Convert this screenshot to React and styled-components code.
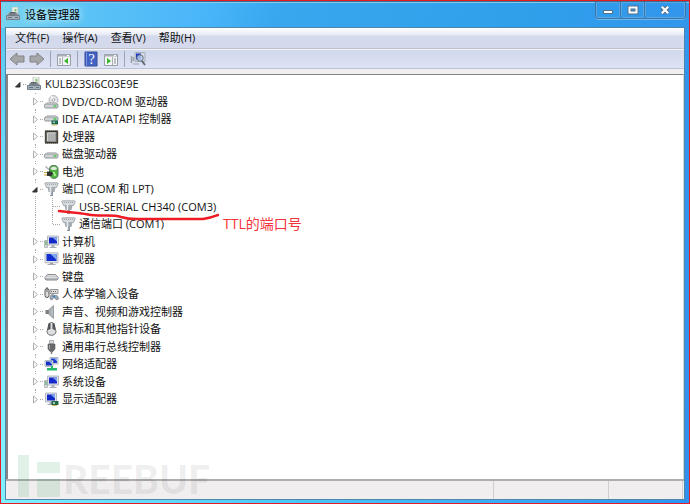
import styled, { createGlobalStyle } from "styled-components";

const GlobalStyle = createGlobalStyle`
	* {
		box-sizing: border-box;
	}
	body {
		margin: 0;
		font-family: "Open Sans", "Noto Sans CJK SC", sans-serif;
		font-size: 11px;
		color: #111;
	}
	button {
		padding: 0;
		border: 0;
		background: none;
		font: inherit;
		color: inherit;
	}
	svg {
		display: block;
	}
`;

const ComputerIcon = () => (
	<Icon viewBox="0 0 15 14">
		<path d="M6 0h6v8H6z" fill="#eef0ec" stroke="#b4b9b3" strokeWidth=".7" />
		<path d="M8.500 2h2v2.500h-2z" fill="#7cc76c" />
		<path d="M2 7l2-2h6l3 3v2H1z" fill="#8b949a" />
		<path d="M4 5.500h5M3.500 7h6" stroke="#5d666c" />
		<path d="M.5 8.500h13v4H.5z" fill="#a4b1ba" stroke="#75818a" />
		<path d="M2 10.500h4M9 10.500h3" stroke="#5e7482" />
	</Icon>
);

const Drive = ({ y = 7 }) => (
	<g>
		<path d={`M3 ${y}h9l2 2H1z`} fill="#e3e5e7" stroke="#aaa" strokeWidth=".6" />
		<rect x=".5" y={y + 1.5} width="13.500" height="4" rx="1.200" fill="#d0d3d5" stroke="#8f9498" />
		<path d={`M9.500 ${y + 3.5}h3`} stroke="#35c83e" strokeWidth="1.400" />
	</g>
);

const DiscIcon = () => (
	<Icon viewBox="0 0 15 14">
		<circle cx="9.500" cy="5" r="4.500" fill="#e1e1e6" stroke="#a5a5ac" strokeWidth=".8" />
		<path d="M9.500 5L7 1.500M9.500 5l3 2.500" stroke="#fff" strokeWidth="1.500" />
		<circle cx="9.500" cy="5" r="1.300" fill="#fff" stroke="#888" strokeWidth=".7" />
		<Drive y={7.5} />
	</Icon>
);

const IdeIcon = () => (
	<Icon viewBox="0 0 15 14">
		<Drive y={3.5} />
		<path d="M7.500 8.500h6.500v4H7.500z" fill="#1d6b50" />
		<path d="M8 13h5" stroke="#d4c25a" />
		<path d="M9 9.500h2v1.500H9z" fill="#9fcdb5" />
	</Icon>
);

const CpuIcon = () => (
	<Icon viewBox="0 0 15 14">
		<rect x="1" y=".5" width="13" height="13" rx="1" fill="#3a3731" />
		<rect x="1" y=".5" width="13" height="13" fill="none" stroke="#7b786b" strokeDasharray="1 1" />
		<rect x="3" y="2.500" width="9" height="9" fill="#b0b0b0" stroke="#8b8b8b" />
		<path d="M3.500 11V3h8" fill="none" stroke="#d2d2d2" />
	</Icon>
);

const DiskIcon = () => (
	<Icon viewBox="0 0 15 14">
		<Drive y={5.5} />
	</Icon>
);

const BatteryIcon = () => (
	<Icon viewBox="0 0 15 14">
		<path d="M5.500 4c0-5 8.500-5 8.500 0v6c0 4-7 5-8.500 0z" fill="#4fb341" stroke="#52715a" />
		<path d="M6.500 3.500c1 2 5.500 2 6.500 0-1-2.500-5.500-2.500-6.500 0z" fill="#dfe9dc" />
		<path d="M9.500 7l2 4" stroke="#a5ea8e" strokeWidth="1.800" />
		<path d="M1.500 1.500l3.500 3" stroke="#aaa" strokeWidth="1.300" />
		<path d="M3 6.500h4.500l1.500 2-1.500 2.500H3z" fill="#333" />
		<path d="M0 7.500h3M0 10h3" stroke="#c4a22b" />
	</Icon>
);

const PortIcon = () => (
	<Icon viewBox="0 0 15 14">
		<path d="M.8 1.500Q.8.800 1.800.800H13.200Q14.200.800 14.200 1.500L12.500 5.500H2.500z" fill="#d5d9dc" stroke="#969da3" strokeWidth=".8" />
		<path d="M3 2.500h9" stroke="#a3aab0" strokeDasharray="1 1" />
		<path d="M3.500 5.500h8l-1 4.500h-6z" fill="#a5adb4" />
		<path d="M6 9.500h3V14H6z" fill="#8e979e" />
		<path d="M6.500 4v9" stroke="#e8ebed" strokeWidth="1.500" />
	</Icon>
);

const Screen = ({ x = 4 }) => (
	<g transform={`translate(${x} 0)`}>
		<path d="M0 1h11v9H0z" fill="#dfe2e8" stroke="#a5abb5" strokeWidth=".8" />
		<path d="M1.500 2.500h8v6h-8z" fill="#1428c8" />
		<path d="M5 2.500h4.500v4z" fill="#7fa5ee" />
		<path d="M4 10h3v2H4z" fill="#aab0b8" />
		<path d="M2 12.500h7" stroke="#a5abb3" />
	</g>
);

const PcIcon = () => (
	<Icon viewBox="0 0 15 14">
		<path d="M.5 5.500h3v7h-3z" fill="#d5d9da" stroke="#a0a6aa" strokeWidth=".7" />
		<path d="M2 6v4" stroke="#42a84a" />
		<Screen x={3.5} />
	</Icon>
);

const MonitorIcon = () => (
	<Icon viewBox="0 0 15 14">
		<path d="M1 .8h13v10H1z" fill="#e2e4e8" stroke="#a9afb5" strokeWidth=".8" />
		<path d="M2.500 2h10v7h-10z" fill="#142cd0" />
		<path d="M6.500 2h6v6z" fill="#7ea8f0" />
		<path d="M6 11h3v1H6z" fill="#999" />
		<path d="M3.500 12.500h8" stroke="#a5abb1" />
	</Icon>
);

const KeyboardIcon = () => (
	<Icon viewBox="0 0 15 14">
		<path d="M3.500 4.500h8l2.500 3v1.500l-1 1H2L1 9V7.500z" fill="#dcdee0" stroke="#85898e" />
		<path d="M3 6.500h9" stroke="#c8cbce" />
		<path d="M1.500 9h12" stroke="#90959a" />
	</Icon>
);

const HidIcon = () => (
	<Icon viewBox="0 0 15 14">
		<rect x="1" y="1.500" width="4" height="9" rx="2" fill="#ddd" stroke="#555" />
		<path d="M3 0v5" stroke="#666" />
		<path d="M6 2.500h8v4H6z" fill="#ddd" stroke="#999" />
		<path d="M7 4.500h6" stroke="#666" strokeDasharray="1 1" />
		<path d="M6 12c0-5 2-5 4-4s4-1 4.500 4l-2 1-1.500-2H9l-1 2z" fill="#9aa5b0" stroke="#6b7580" strokeWidth=".6" />
		<path d="M9 9.500h2" stroke="#2c86d8" strokeWidth="1.500" />
	</Icon>
);

const SpeakerIcon = () => (
	<Icon viewBox="0 0 15 14">
		<path d="M1.500 5h3.500v4H1.500z" fill="#777f85" />
		<path d="M4.500 5L9.500.500v13L4.500 9z" fill="#a6adb2" stroke="#82898e" strokeWidth=".7" />
		<path d="M8 3v8" stroke="#c5cacd" />
	</Icon>
);

const MouseIcon = () => (
	<Icon viewBox="0 0 15 14">
		<path d="M5 1.500q2.500-2 5 0l2 8c0 5-9 5-9 0z" fill="#dcdedf" stroke="#66696c" />
		<path d="M4.500 1.500h2V7L4 8zM8.500 1.500h2L11 8l-2.500-1z" fill="#4c4f52" />
	</Icon>
);

const UsbIcon = () => (
	<Icon viewBox="0 0 15 14">
		<path d="M5.500.5h4v3h-4z" fill="#d7d9da" stroke="#9b9fa1" strokeWidth=".8" />
		<path d="M4 4h7v5l-2 2.500H6L4 9z" fill="#65696c" stroke="#5a5e61" strokeWidth=".6" />
		<path d="M7.500 11v3" stroke="#777" strokeWidth="1.500" />
		<path d="M5.500 5v4" stroke="#a3a7a9" />
	</Icon>
);

const NetworkIcon = () => (
	<Icon viewBox="0 0 15 14">
		<path d="M6 .5h8v6.500H6z" fill="#dce2ea" stroke="#9ba3ac" strokeWidth=".7" />
		<path d="M7 1.500h6v4.500H7z" fill="#1b3bcc" />
		<path d="M10 1.500h3v3z" fill="#8fb6f5" />
		<path d="M1 3.500h8v6H1z" fill="#dce2ea" stroke="#9ba3ac" strokeWidth=".7" />
		<path d="M2 4.500h6v4H2z" fill="#152ec0" />
		<path d="M5 4.500h3v3z" fill="#8fb6f5" />
		<path d="M7 9h2v2h4v2.500H3V11h4z" fill="#26b96c" />
	</Icon>
);

const DisplayIcon = () => (
	<Icon viewBox="0 0 15 14">
		<Screen x={1.5} />
		<path d="M7.500 9h7v4h-7z" fill="#1f684a" />
		<path d="M9 10h2v2H9z" fill="#a4c8b4" />
		<path d="M8 13.500h5" stroke="#cfbf61" />
	</Icon>
);

const ArrowIcon = ({ flip }) => (
	<ToolSvg viewBox="0 0 16 16">
		<path
			d="M1 8L8 2v3H15v6H8v3z"
			transform={flip ? "matrix(-1 0 0 1 16 0)" : undefined}
			fill="#a5a6a8"
			stroke="#828386"
			strokeLinejoin="round"
		/>
	</ToolSvg>
);

const PaneIcon = ({ flip }) => (
	<ToolSvg viewBox="0 0 16 16">
		<path d="M1.500 3.500h13v11h-13z" fill="#f3f4f5" stroke="#9a9fa5" />
		<path d="M2 4.500h12" stroke="#a9afb6" strokeWidth="2" />
		<path d="M11 4.500h2" stroke="#fff" />
		<g transform={flip ? "matrix(-1 0 0 1 16 0)" : undefined}>
			<path d="M6.500 6v8" stroke="#aaafb4" />
			<path d="M3 8h2M3 10h2M3 12h2" stroke="#8a9096" />
			<path d="M12 7v6L8 10z" fill="#39b52b" />
		</g>
	</ToolSvg>
);

const HelpIcon = () => (
	<ToolSvg viewBox="0 0 16 16">
		<path d="M2 1h12v14H2z" fill="#4263c4" stroke="#344c9a" />
		<path d="M3.500 1v14" stroke="#7892dc" />
		<text x="8.500" y="13" fill="#fff" fontSize="14" fontFamily="Liberation Serif" textAnchor="middle">
			?
		</text>
	</ToolSvg>
);

const ScanIcon = () => (
	<ToolSvg viewBox="0 0 16 16">
		<path d="M1.500 5v7M3.500 6v4" stroke="#9aa0a6" strokeWidth="1.500" />
		<path d="M5 1.500h10v9H5z" fill="#d5dae3" stroke="#a8aeb8" />
		<path d="M6 2.500h5v6H6z" fill="#1a35c8" />
		<circle cx="10" cy="7" r="3.200" fill="#bdd5f3" fillOpacity=".8" stroke="#65707f" />
		<path d="M12 10l3 4" stroke="#606871" strokeWidth="1.800" />
		<path d="M3 13h6" stroke="#9ba1a8" />
	</ToolSvg>
);

const devices = [
	{ name: "KULB23SI6C03E9E", level: 0, icon: ComputerIcon, open: true },
	{ name: "DVD/CD-ROM 驱动器", level: 1, icon: DiscIcon },
	{ name: "IDE ATA/ATAPI 控制器", level: 1, icon: IdeIcon },
	{ name: "处理器", level: 1, icon: CpuIcon },
	{ name: "磁盘驱动器", level: 1, icon: DiskIcon },
	{ name: "电池", level: 1, icon: BatteryIcon },
	{ name: "端口 (COM 和 LPT)", level: 1, icon: PortIcon, open: true },
	{ name: "USB-SERIAL CH340 (COM3)", level: 2, icon: PortIcon, marked: true },
	{ name: "通信端口 (COM1)", level: 2, icon: PortIcon, last: true },
	{ name: "计算机", level: 1, icon: PcIcon },
	{ name: "监视器", level: 1, icon: MonitorIcon },
	{ name: "键盘", level: 1, icon: KeyboardIcon },
	{ name: "人体学输入设备", level: 1, icon: HidIcon },
	{ name: "声音、视频和游戏控制器", level: 1, icon: SpeakerIcon },
	{ name: "鼠标和其他指针设备", level: 1, icon: MouseIcon },
	{ name: "通用串行总线控制器", level: 1, icon: UsbIcon },
	{ name: "网络适配器", level: 1, icon: NetworkIcon },
	{ name: "系统设备", level: 1, icon: PcIcon },
	{ name: "显示适配器", level: 1, icon: DisplayIcon, last: true },
];

const Device = ({ name, level, icon: DeviceIcon, open, last, marked }) => (
	<Row role="treeitem" aria-level={level + 1} aria-expanded={level < 2 ? !!open : undefined}>
		{level > 0 && <Indent />}
		{level > 1 && <Guide />}
		{level < 2 ? (
			<Expander $line={level > 0} $last={last} aria-label={name}>
				<svg width="8" height="13" viewBox="0 0 8 13">
					<path d="M0 0h8v13H0z" fill="#fff" />
					{open ? (
						<path d="M6 4.500v4.500H1.500z" fill="#333" stroke="#333" />
					) : (
						<path d="M2.500 3v7L6.500 6.500z" fill="#fff" stroke="#adadad" />
					)}
				</svg>
			</Expander>
		) : (
			<Elbow $line $last={last} />
		)}
		<Stub $wide={level > 1} />
		<DeviceIcon />
		<DeviceName>{name}</DeviceName>
		{marked && (
			<Note>
				<svg width="164" height="24" viewBox="0 0 164 24">
					<path
						d="M3 5C12 6.500 20 6 32 8.500S55 8 65 11s14 2 22 2h60c8-1 10-2 15-4"
						fill="none"
						stroke="#ed1c24"
						strokeWidth="2.500"
						strokeLinecap="round"
					/>
				</svg>
				<NoteText>TTL的端口号</NoteText>
			</Note>
		)}
	</Row>
);

const App = () => {
	return (
		<Window>
			<GlobalStyle />
			<TitleBar>
				<Title>
					<ComputerIcon />
					<h1>设备管理器</h1>
				</Title>
				<WindowButtons>
					<WindowButton aria-label="最小化">
						<svg width="12" height="12" viewBox="0 0 12 12">
							<path d="M1.500 6.500h9v3h-9z" fill="#fff" stroke="#52708b" />
						</svg>
					</WindowButton>
					<WindowButton aria-label="最大化">
						<svg width="12" height="12" viewBox="0 0 12 12">
							<path d="M2.500 3.500h7v5h-7z" fill="none" stroke="#52708b" strokeWidth="4" />
							<path d="M2.500 3.500h7v5h-7z" fill="none" stroke="#fff" strokeWidth="2" />
						</svg>
					</WindowButton>
					<WindowButton $close aria-label="关闭">
						<svg width="12" height="12" viewBox="0 0 12 12">
							<path d="M3 3l6 6M9 3L3 9" stroke="#52708b" strokeWidth="4.500" />
							<path d="M2.800 2.800l6.400 6.400M9.200 2.800L2.800 9.200" stroke="#fff" strokeWidth="2.200" />
						</svg>
					</WindowButton>
				</WindowButtons>
			</TitleBar>
			<Client>
				<MenuBar>
					<button>文件(F)</button>
					<button>操作(A)</button>
					<button>查看(V)</button>
					<button>帮助(H)</button>
				</MenuBar>
				<ToolBar>
					<ToolButton aria-label="后退">
						<ArrowIcon />
					</ToolButton>
					<ToolButton aria-label="前进">
						<ArrowIcon flip />
					</ToolButton>
					<Separator />
					<ToolButton aria-label="控制台树">
						<PaneIcon />
					</ToolButton>
					<Separator />
					<ToolButton aria-label="帮助">
						<HelpIcon />
					</ToolButton>
					<ToolButton aria-label="操作窗格">
						<PaneIcon flip />
					</ToolButton>
					<Separator />
					<ToolButton aria-label="扫描检测硬件改动">
						<ScanIcon />
					</ToolButton>
				</ToolBar>
				<Tree role="tree">
					{devices.map((device) => (
						<Device key={device.name} {...device} />
					))}
				</Tree>
				<StatusBar>
					<span />
					<span />
					<span />
				</StatusBar>
			</Client>
			<Watermark>
				<svg width="43" height="42" viewBox="0 0 43 42">
					<path d="M0 0h11v42H0zM19 7h23v11H19zM19 24h23v18H19z" fill="#2a9d5c" fillOpacity=".14" />
				</svg>
				<span>REEBUF</span>
			</Watermark>
		</Window>
	);
};

const Window = styled.div`
	position: relative;
	display: flex;
	flex-direction: column;
	min-height: 100vh;
	padding: 0 4px 3px;
	border: 1px solid #e51c24;
	background:
		linear-gradient(#5cc8f0, #7ff0ff 60%) 0 27px / 4px 100% no-repeat,
		linear-gradient(90deg, #7ff0ff, #4cc8f8 40%, #2b93f5) 0 100% / 100% 3px no-repeat,
		linear-gradient(100deg, #79d4ee 0%, #5cc4f5 10%, #4ab6fa 26%, #38a7ee 36%, #309feb 70%, #3290ed 100%);
`;

const TitleBar = styled.header`
	display: flex;
	justify-content: space-between;
	height: 26px;
	margin: 0 -4px;
	padding: 0 3px 0 5px;
	border-top: 1px solid #39708f;
	box-shadow: inset 0 1px #84c9ee;
`;

const Title = styled.div`
	display: flex;
	align-items: center;
	gap: 4px;
	padding-bottom: 2px;
	h1 {
		margin: 0;
		font-size: 11px;
		font-weight: 400;
		color: #000;
		text-shadow: 0 0 6px #d5f3ff, 0 0 10px #b5e8ff;
	}
`;

const WindowButtons = styled.div`
	display: flex;
	align-self: flex-start;
	height: 17px;
	border: 1px solid #3b76a8;
	border-top: 0;
	border-radius: 0 0 4px 4px;
	box-shadow: 0 1px 0 #6cb7ed;
`;

const WindowButton = styled.button`
	display: flex;
	align-items: center;
	justify-content: center;
	width: ${({ $close }) => ($close ? "41px" : "24px")};
	border-radius: 0 0 3px 3px;
	box-shadow: inset 0 0 0 1px #5ba6e0;
	& + & {
		border-left: 1px solid #3b76a8;
	}
`;

const Client = styled.main`
	flex: 1;
	display: flex;
	flex-direction: column;
	border: 1px solid #4b88ac;
	background: #f0eeee;
`;

const MenuBar = styled.nav`
	display: flex;
	align-items: center;
	gap: 13px;
	height: 21px;
	padding: 0 0 2px 9px;
	border-bottom: 1px solid #bfc2c9;
	background: linear-gradient(#fff 0, #e6eaf5 7px, #d4daec 8px, #d4daec 100%);
`;

const ToolBar = styled.div`
	display: flex;
	align-items: center;
	height: 20px;
	padding-left: 1px;
	border-top: 1px solid #f3f4fa;
	border-bottom: 1px solid #bac3da;
	background: linear-gradient(#d2d8eb, #dde3f5);
`;

const ToolButton = styled.button`
	display: flex;
	align-items: center;
	justify-content: center;
	width: 20px;
	height: 18px;
`;

const ToolSvg = styled.svg`
	width: 16px;
	height: 16px;
`;

const Separator = styled.span`
	width: 1px;
	height: 16px;
	margin: 0 3px;
	background: #9da3b2;
`;

const Tree = styled.div`
	flex: 1;
	margin-top: 5px;
	border-top: 1px solid #858585;
	border-left: 2px solid #858585;
	border-right: 1px solid #d5d8da;
	background: #fff;
`;

// rows alternate between 17px and 18px
const Row = styled.div`
	position: relative;
	display: flex;
	align-items: center;
	height: 18px;
	padding-left: 6px;
	white-space: nowrap;
	&:nth-child(even) {
		height: 17px;
	}
`;

const Indent = styled.span`
	width: 17px;
`;

const dots = "repeating-linear-gradient(#aaa 0 1px, transparent 1px 2px) 4px 0 / 1px";

const Guide = styled.span`
	width: 17px;
	align-self: stretch;
	background: ${dots} 100% no-repeat;
`;

const Elbow = styled.span`
	width: 8px;
	align-self: stretch;
	background: ${({ $line, $last }) => ($line ? `${dots} ${$last ? "50%" : "100%"} no-repeat` : "none")};
`;

const Expander = styled(Elbow).attrs({ as: "button" })`
	display: flex;
	align-items: center;
`;

const Stub = styled.span`
	width: ${({ $wide }) => ($wide ? "8px" : "4px")};
	height: 1px;
	margin-left: ${({ $wide }) => ($wide ? "-3px" : "1px")};
	background: repeating-linear-gradient(90deg, #aaa 0 1px, transparent 1px 2px);
`;

const Icon = styled.svg`
	flex: none;
	width: 15px;
	height: 14px;
`;

const DeviceName = styled.span`
	margin-left: 3px;
	line-height: 16px;
`;

const Note = styled.div`
	position: absolute;
	top: 8px;
	left: 48px;
	display: flex;
	align-items: flex-start;
	gap: 3px;
	pointer-events: none;
	z-index: 1;
`;

const NoteText = styled.span`
	padding-top: 8px;
	color: #f5333a;
	font-size: 14px;
	line-height: 20px;
`;

const StatusBar = styled.footer`
	display: grid;
	grid-template-columns: 1fr 115px 74px;
	height: 20px;
	padding-right: 1px;
	border-top: 2px solid #adadad;
	span {
		border-right: 1px solid #cfcfcf;
	}
`;

const Watermark = styled.div`
	position: absolute;
	left: 17px;
	bottom: 6px;
	display: flex;
	align-items: flex-end;
	gap: 2px;
	pointer-events: none;
	span {
		font-family: Lato, sans-serif;
		font-size: 39px;
		font-weight: 900;
		line-height: 36px;
		color: rgba(0, 0, 0, 0.07);
	}
`;

export default App;
